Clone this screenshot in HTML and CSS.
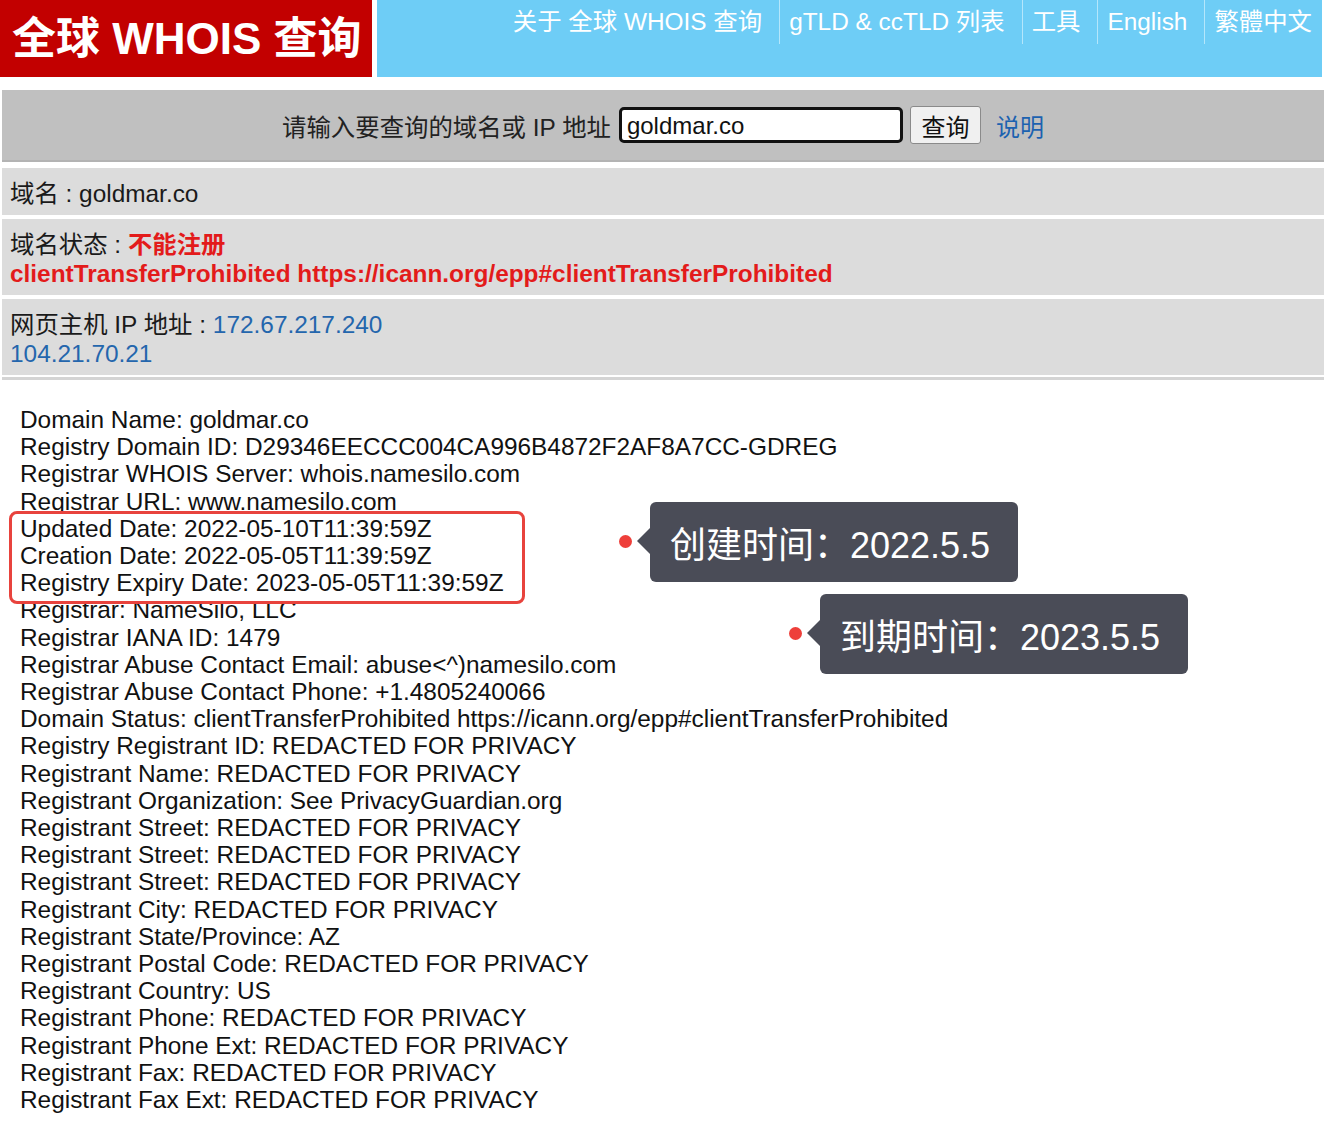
FILE: index.html
```html
<!DOCTYPE html>
<html lang="zh-CN">
<head>
    <meta charset="UTF-8">
    <meta name="viewport" content="width=device-width, initial-scale=1.0">
    <title>全球 WHOIS 查询</title>
    <link rel="stylesheet" href="styles.css">
</head>
<body>
    <div class="header">
        <div class="logo">全球 WHOIS 查询</div>
        <div class="nav">
            <a href="#">关于 全球 WHOIS 查询</a>
            <a href="#">gTLD &amp; ccTLD 列表</a>
            <a href="#">工具</a>
            <a href="#">English</a>
            <a href="#">繁體中文</a>
        </div>
    </div>

    <form class="search">
        <label for="q">请输入要查询的域名或 IP 地址</label>
        <input id="q" type="text" value="goldmar.co">
        <button type="button">查询</button>
        <a class="help" href="#">说明</a>
    </form>

    <div class="info">
        <div class="row">域名 : goldmar.co</div>
        <div class="row">域名状态 : <b class="red">不能注册</b><br>
            <b class="red">clientTransferProhibited https://icann.org/epp#clientTransferProhibited</b></div>
        <div class="row">网页主机 IP 地址 : <span class="blue">172.67.217.240</span><br>
            <span class="blue">104.21.70.21</span></div>
    </div>
    <div class="rule"></div>

    <div class="whois">
        <div>Domain Name: goldmar.co</div>
        <div>Registry Domain ID: D29346EECCC004CA996B4872F2AF8A7CC-GDREG</div>
        <div>Registrar WHOIS Server: whois.namesilo.com</div>
        <div>Registrar URL: www.namesilo.com</div>
        <div class="mark">
            <div>Updated Date: 2022-05-10T11:39:59Z</div>
            <div>Creation Date: 2022-05-05T11:39:59Z</div>
            <div>Registry Expiry Date: 2023-05-05T11:39:59Z</div>
        </div>
        <div>Registrar: NameSilo, LLC</div>
        <div>Registrar IANA ID: 1479</div>
        <div>Registrar Abuse Contact Email: abuse&lt;^)namesilo.com</div>
        <div>Registrar Abuse Contact Phone: +1.4805240066</div>
        <div>Domain Status: clientTransferProhibited https://icann.org/epp#clientTransferProhibited</div>
        <div>Registry Registrant ID: REDACTED FOR PRIVACY</div>
        <div>Registrant Name: REDACTED FOR PRIVACY</div>
        <div>Registrant Organization: See PrivacyGuardian.org</div>
        <div>Registrant Street: REDACTED FOR PRIVACY</div>
        <div>Registrant Street: REDACTED FOR PRIVACY</div>
        <div>Registrant Street: REDACTED FOR PRIVACY</div>
        <div>Registrant City: REDACTED FOR PRIVACY</div>
        <div>Registrant State/Province: AZ</div>
        <div>Registrant Postal Code: REDACTED FOR PRIVACY</div>
        <div>Registrant Country: US</div>
        <div>Registrant Phone: REDACTED FOR PRIVACY</div>
        <div>Registrant Phone Ext: REDACTED FOR PRIVACY</div>
        <div>Registrant Fax: REDACTED FOR PRIVACY</div>
        <div>Registrant Fax Ext: REDACTED FOR PRIVACY</div>
    </div>

    <div class="tip tip-create">创建时间：2022.5.5</div>
    <div class="tip tip-expire">到期时间：2023.5.5</div>
</body>
</html>
```

FILE: styles.css
```css
body{
    margin: 0;
    font-family: "Liberation Sans", Arial, "Noto Sans CJK SC", sans-serif;
    color: #1a1a1a;
    background: #fff;
}

a{
    text-decoration: none;
}

.header{
    display: flex;
    height: 77px;
    gap: 5px;
    padding-right: 2px;
}

.logo{
    width: 372px;
    background: #c20000;
    color: #fff;
    font-weight: bold;
    font-size: 44px;
    line-height: 77px;
    padding-left: 12px;
    box-sizing: border-box;
    white-space: nowrap;
}

.nav{
    flex: 1;
    background: #6ecdf6;
    display: flex;
    justify-content: flex-end;
    align-items: flex-start;
    padding-right: 10px;
}

.nav a{
    color: #fff;
    font-size: 24.4px;
    line-height: 44px;
    padding: 0 17px 0 9px;
    border-left: 1px solid #b4e6fb;
}

.nav a:first-child{
    border-left: none;
}

.nav a:last-child{
    padding-right: 0;
}

.search{
    margin: 13px 0 0 2px;
    height: 70px;
    background: #c0c0c0;
    border-bottom: 2px solid #b3b3b3;
    display: flex;
    align-items: center;
    justify-content: center;
    gap: 8px;
}

.search label{
    font-size: 24.4px;
    color: #222;
}

.search input{
    width: 284px;
    height: 36px;
    box-sizing: border-box;
    border: 3px solid #111;
    border-radius: 5px;
    font-family: inherit;
    font-size: 24px;
    padding: 2px 5px 0;
    outline: none;
    color: #111;
}

.search button{
    width: 71px;
    height: 38px;
    margin-left: -1px;
    font-family: inherit;
    font-size: 24px;
    background: #f0f0f0;
    border: 1px solid #8a8a8a;
    border-radius: 3px;
    color: #111;
    padding: 0;
}

.search .help{
    margin-left: 7px;
    font-size: 24px;
    color: #1c62b0;
}

.info{
    margin: 6px 0 0 2px;
    display: flex;
    flex-direction: column;
    gap: 4px;
}

.row{
    background: #dcdcdc;
    padding: 11px 8px 7px;
    font-size: 24.4px;
    line-height: 29px;
}

.red{
    color: #e31b1b;
}

.blue{
    color: #2466ad;
}

.rule{
    margin: 2px 0 0 2px;
    height: 3px;
    background: #d4d4d4;
}

.whois{
    padding: 26px 0 0 20px;
    font-size: 24.4px;
    line-height: 27.2px;
    color: #111;
}

.mark{
    position: relative;
    width: fit-content;
    margin: -4px 0 -8px -11px;
    padding: 1px 18px 5px 8px;
    border: 3px solid #e8433d;
    border-radius: 8px;
    background: #fff;
}

.tip{
    position: absolute;
    width: 368px;
    height: 80px;
    box-sizing: border-box;
    padding: 7px 0 0 20px;
    background: #4a4c57;
    border-radius: 6px;
    color: #fff;
    font-size: 36px;
    line-height: 73px;
    font-family: "Liberation Sans", "Noto Sans CJK SC", sans-serif;
}

.tip::before{
    content: "";
    position: absolute;
    left: -13px;
    top: 26px;
    border-style: solid;
    border-width: 13px 13px 13px 0;
    border-color: transparent #4a4c57 transparent transparent;
}

.tip::after{
    content: "";
    position: absolute;
    left: -31px;
    top: 33px;
    width: 13px;
    height: 13px;
    border-radius: 50%;
    background: #ee3f3a;
}

.tip-create{
    left: 650px;
    top: 502px;
}

.tip-expire{
    left: 820px;
    top: 594px;
}
```
